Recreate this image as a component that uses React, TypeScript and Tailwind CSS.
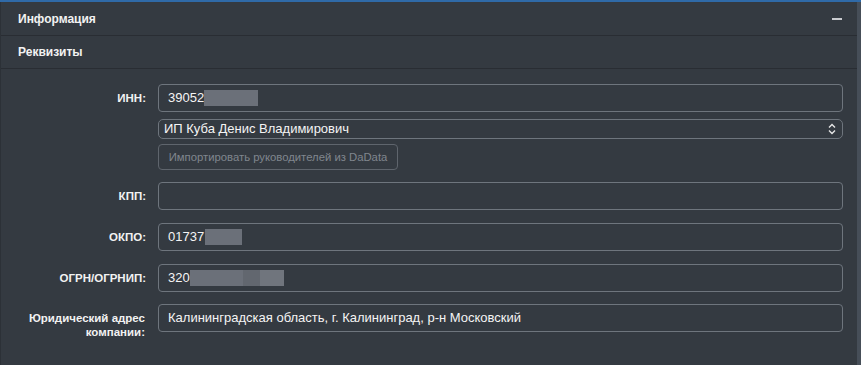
import type { ReactNode } from 'react'

const font = { fontFamily: '"Liberation Sans", Arial, sans-serif' }

function Mask({ w, className = '' }: { w: number; className?: string }) {
  return (
    <span
      className={`inline-block h-[16px] bg-[#6b7079] blur-[0.5px] align-middle ${className}`}
      style={{ width: w }}
    />
  )
}

function Row({ label, children, className = '' }: { label: ReactNode; children: ReactNode; className?: string }) {
  return (
    <div className={`flex items-start gap-[12px] ${className}`}>
      <div className="w-[145px] shrink-0 min-h-[28px] flex items-center justify-end text-right text-[11.5px] font-bold leading-[14px] text-[#f2f2f2]">
        {label}
      </div>
      <div className="flex-1 flex flex-col">{children}</div>
    </div>
  )
}

function Field({ children }: { children?: ReactNode }) {
  return (
    <div className="h-[28px] rounded-[4px] border border-[#6e757d] px-[9px] flex items-center text-[13px] text-[#f4f4f4]">
      {children}
    </div>
  )
}

export default function App() {
  return (
    <div className="w-[861px] h-[365px] bg-[#343a41] border-t-2 border-[#2f6aa8] flex overflow-hidden" style={font}>
      <div className="flex-1 flex flex-col border-l border-[#2c3137]">
        <div className="h-[34px] px-[17px] flex items-center justify-between border-b border-[#292d33] text-[12px] font-bold text-[#f2f2f2]">
          <span>Информация</span>
          <span className="w-[10px] h-[2px] bg-[#c9cbcf] mr-[-2px]" />
        </div>
        <div className="h-[33px] px-[17px] flex items-center border-b border-[#292d33] text-[12px] font-bold text-[#f2f2f2]">
          Реквизиты
        </div>

        <div className="pt-[15px] pr-[14px] flex flex-col">
          <Row label="ИНН:">
            <Field>
              <span>39052</span>
              <Mask w={54} />
            </Field>
            <div className="mt-[7px] h-[20px] rounded-[5px] border border-[#6e757d] pl-[5px] pr-[6px] flex items-center justify-between text-[13px] text-[#f4f4f4]">
              <span>ИП Куба Денис Владимирович</span>
              <svg width="8" height="12" viewBox="0 0 8 12" fill="none" stroke="#e6e6e6" strokeWidth="1.4">
                <path d="M1 4.5 L4 1.5 L7 4.5" />
                <path d="M1 7.5 L4 10.5 L7 7.5" />
              </svg>
            </div>
            <div className="mt-[5px] w-[240px] h-[26px] rounded-[4px] border border-[#5f656d] flex items-center justify-center whitespace-nowrap text-[11.3px] text-[#80868e]">
              Импортировать руководителей из DaData
            </div>
          </Row>

          <Row label="КПП:" className="mt-[12px]">
            <Field />
          </Row>

          <Row label="ОКПО:" className="mt-[13px]">
            <Field>
              <span>01737</span>
              <Mask w={37} className="ml-[1px]" />
            </Field>
          </Row>

          <Row label="ОГРН/ОГРНИП:" className="mt-[13px]">
            <Field>
              <span>320</span>
              <Mask w={53} />
              <Mask w={17} className="bg-[#62676f]" />
              <Mask w={24} className="bg-[#70757d]" />
            </Field>
          </Row>

          <Row label={<span className="pt-[7px] pr-[1px]">Юридический адрес компании:</span>} className="mt-[12px]">
            <Field>Калининградская область, г. Калининград, р-н Московский</Field>
          </Row>
        </div>
      </div>
      <div className="w-[4px] bg-[#464e58]" />
    </div>
  )
}
